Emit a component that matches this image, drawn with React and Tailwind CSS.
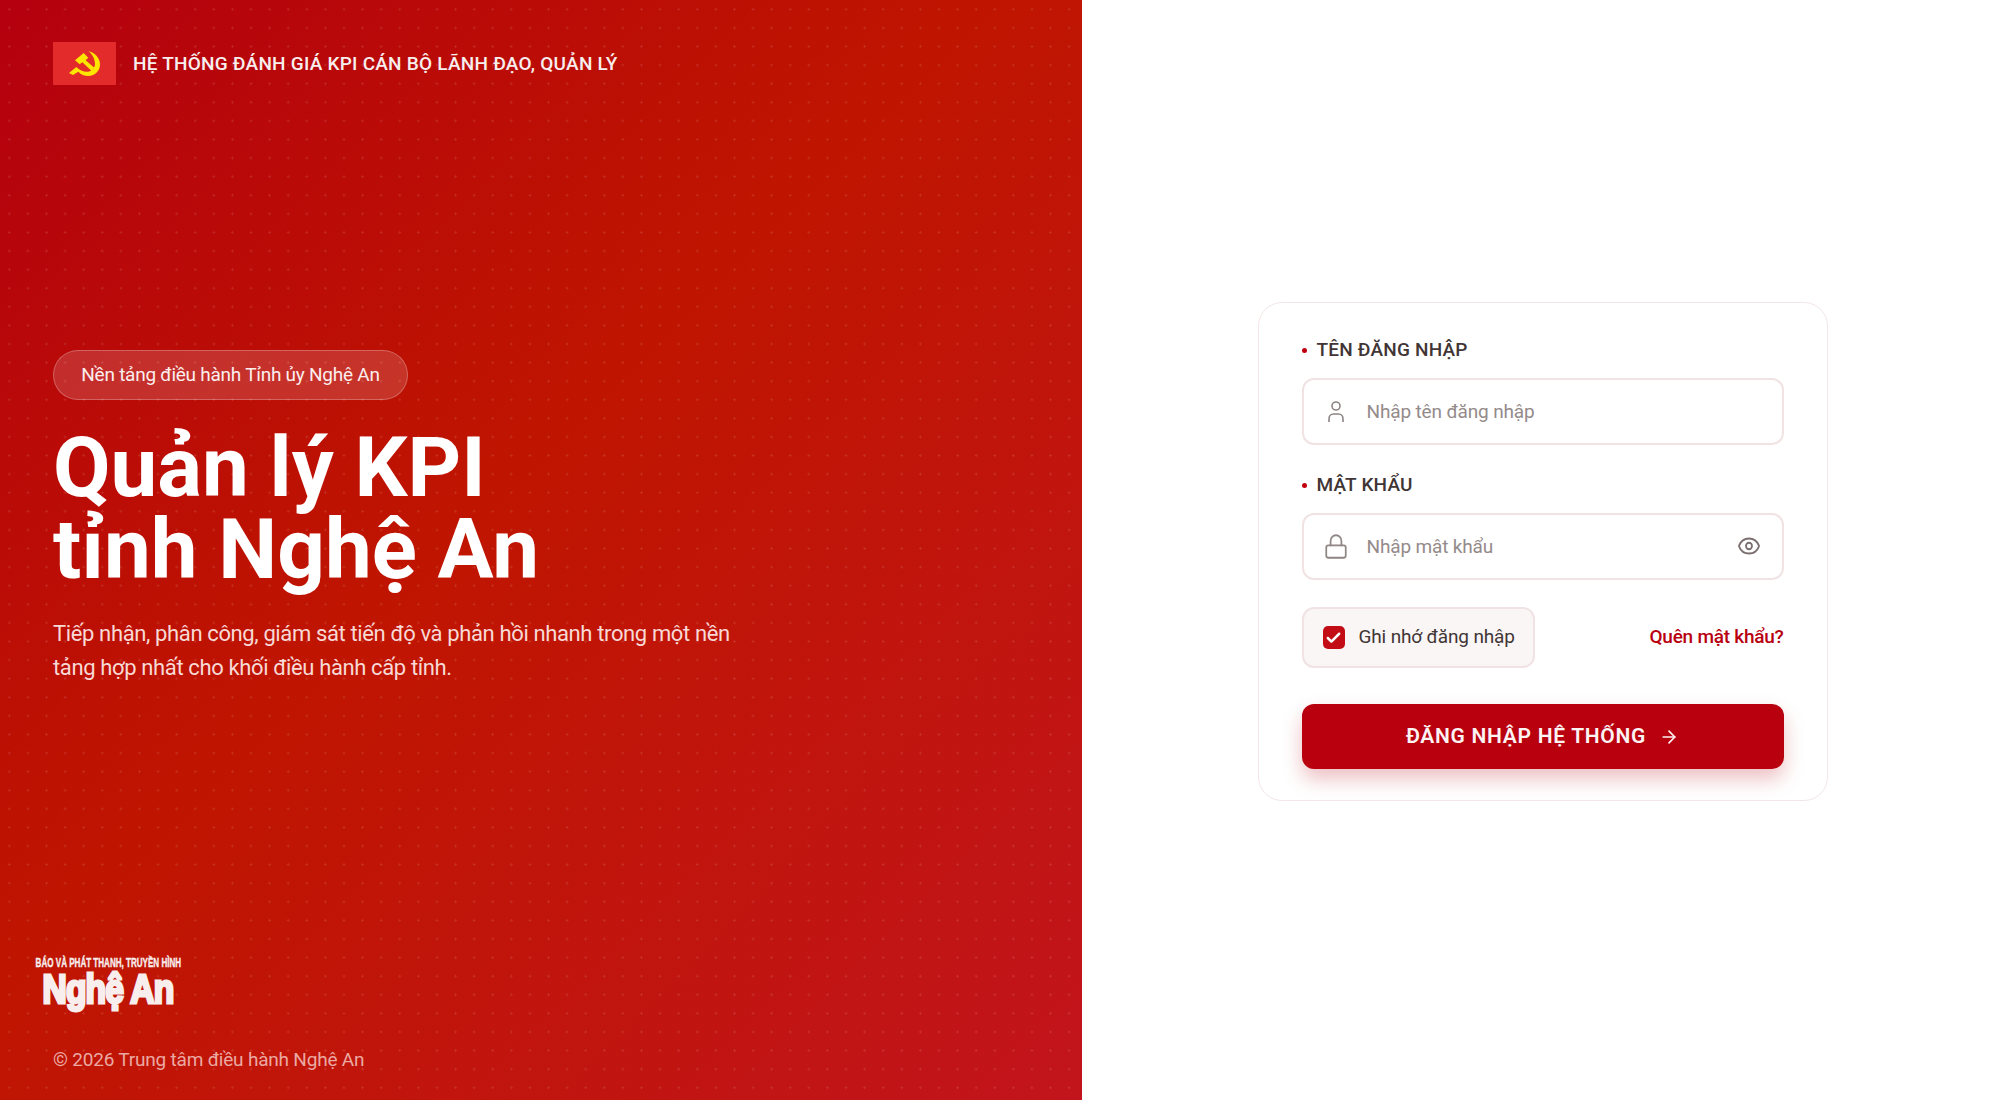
import { Lock, Eye, ArrowRight, Check } from 'lucide-react';

function Flag() {
  return (
    <div className="flex h-[43px] w-[63px] shrink-0 items-center justify-center bg-[#e32b2b]">
      <svg viewBox="0 0 93 75" className="h-[25px] w-[31px]" fill="#ffe600">
        {/* sickle */}
        <path d="M58 0C80 6 93 22 93 40 93 60 78 75 58 75 46 75 36 71 28 62L12 72 0 66 22 48C32 58 44 63 56 62 70 60 78 50 78 38 78 24 70 10 58 0Z" />
        {/* hammer */}
        <path d="M18 28 44 6 58 20 50 28 76 50 68 60 40 34 32 40Z" />
      </svg>
    </div>
  );
}

function Logo() {
  return (
    <div className="ml-[-19px] flex w-[148px] flex-col items-center font-['Liberation_Sans',sans-serif] font-bold text-[#f8eeee]">
      <div className="h-[14px] origin-center scale-x-[0.62] whitespace-nowrap text-[13px] leading-[14px] [-webkit-text-stroke:0.4px_#f8eeee]">BÁO VÀ PHÁT THANH, TRUYỀN HÌNH</div>
      <div className="h-[38px] origin-center scale-x-[0.84] whitespace-nowrap text-[40px] leading-[38px] tracking-[-1px] [-webkit-text-stroke:3px_#f8eeee]">Nghệ An</div>
    </div>
  );
}

function Label({ children }) {
  return (
    <div className="flex h-[20px] items-center gap-[10px] text-[19px] font-medium leading-[20px] tracking-[0.2px] text-[#413535]">
      <span className="h-[5px] w-[5px] rounded-full bg-[#c0000f]"></span>
      {children}
    </div>
  );
}

export default function App() {
  return (
    <div className="flex h-[1100px] w-full bg-white font-['Roboto',sans-serif]">
      <div className="flex w-[1082px] shrink-0 flex-col bg-[linear-gradient(135deg,#b4000f_0%,#bf1500_45%,#c2141c_100%)]">
        <div className="flex h-full flex-col bg-[radial-gradient(rgba(255,255,255,0.11)_1px,transparent_1.300px)] bg-[size:18.6px_18.6px] pl-[53px]">
          <div className="mt-[42px] flex items-center gap-[17px]">
            <Flag />
            <span className="pt-[2px] text-[19px] font-medium tracking-[0.23px] text-[#f8eeee]">HỆ THỐNG ĐÁNH GIÁ KPI CÁN BỘ LÃNH ĐẠO, QUẢN LÝ</span>
          </div>

          <div className="mt-[265px] flex h-[50px] w-[355px] items-center justify-center rounded-full border border-white/25 bg-white/15 text-[19px] tracking-[-0.25px] text-[#fbeeee]">
            Nền tảng điều hành Tỉnh ủy Nghệ An
          </div>
          <h1 className="mt-[27px] text-[83.500px] font-bold leading-[82px] text-white">
            Quản lý KPI
            <br />
            tỉnh Nghệ An
          </h1>
          <p className="mt-[26px] w-[700px] text-[22px] leading-[34px] tracking-[-0.37px] text-[#f8d9d6]">
            Tiếp nhận, phân công, giám sát tiến độ và phản hồi nhanh trong một nền tảng hợp nhất cho khối điều hành cấp tỉnh.
          </p>

          <div className="mt-auto">
            <Logo />
            <p className="mb-[28px] mt-[40px] text-[19px] leading-[24px] tracking-[-0.2px] text-[#eba9a3]">© 2026 Trung tâm điều hành Nghệ An</p>
          </div>
        </div>
      </div>

      <div className="flex flex-1 items-center justify-center pl-[3px] pt-[3px]">
        <div className="w-[570px] rounded-[24px] border border-[#f4e6e6] px-[43px] pb-[31px] pt-[37px]">
          <Label>TÊN ĐĂNG NHẬP</Label>
          <div className="mt-[18px] flex h-[67px] items-center rounded-[12px] border-2 border-[#f1e3e3] pl-[24px] text-[#8f8585]">
            <svg viewBox="0 0 16 22" className="h-[22px] w-[16px]" fill="none" stroke="currentColor" strokeWidth="1.6">
              <circle cx="8" cy="5" r="4" />
              <path d="M1 21v-3c0-3 2-5 4.500-5h5c2.500 0 4.500 2 4.500 5v3" />
            </svg>
            <span className="ml-[23px] pt-[1px] text-[19px] tracking-[-0.15px] text-[#948a8a]">Nhập tên đăng nhập</span>
          </div>

          <div className="mt-[30px]"><Label>MẬT KHẨU</Label></div>
          <div className="mt-[18px] flex h-[67px] items-center rounded-[12px] border-2 border-[#f1e3e3] pl-[19px] pr-[20px] text-[#8f8585]">
            <Lock className="h-[27px] w-[26px]" strokeWidth={1.6} preserveAspectRatio="none" />
            <span className="ml-[18px] flex-1 pt-[1px] text-[19px] tracking-[-0.15px] text-[#948a8a]">Nhập mật khẩu</span>
            <Eye className="mb-[1px] mr-[1px] h-[26px] w-[24px] text-[#7a6e6e]" strokeWidth={1.8} preserveAspectRatio="none" />
          </div>

          <div className="mt-[27px] flex items-center justify-between">
            <div className="flex h-[61px] w-[233px] items-center gap-[14px] rounded-[12px] border-2 border-[#f1e3e3] bg-[#f9f6f5] pl-[19px]">
              <span className="flex h-[23px] w-[22px] items-center justify-center rounded-[5px] bg-[#c30d16] text-white">
                <Check className="h-[18px] w-[17px]" strokeWidth={3.5} />
              </span>
              <span className="text-[19px] tracking-[-0.15px] text-[#413535]">Ghi nhớ đăng nhập</span>
            </div>
            <a className="text-[19px] font-medium tracking-[-0.25px] text-[#b8000f]">Quên mật khẩu?</a>
          </div>

          <button className="mt-[36px] flex h-[65px] w-full items-center justify-center gap-[13px] rounded-[12px] bg-[#b8000f] text-[21px] font-semibold tracking-[0.7px] text-[#fdf3f3] shadow-[0_10px_20px_rgba(184,0,15,0.25)]">
            ĐĂNG NHẬP HỆ THỐNG
            <ArrowRight className="h-[20px] w-[20px]" strokeWidth={2} />
          </button>
        </div>
      </div>
    </div>
  );
}
